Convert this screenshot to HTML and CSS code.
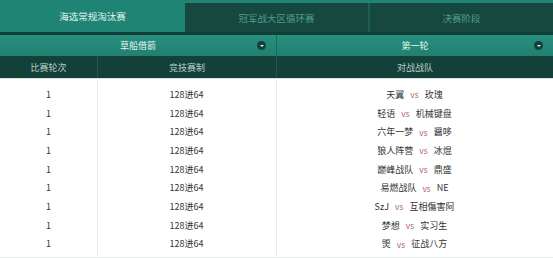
FILE: index.html
```html
<!DOCTYPE html>
<html lang="zh-CN">
<head>
    <meta charset="UTF-8">
    <meta name="viewport" content="width=device-width, initial-scale=1.0">
    <title>赛程</title>
    <link rel="stylesheet" href="styles.css">
</head>
<body>

    <div class="tabs">
        <div class="tab active">海选常规淘汰赛</div>
        <div class="tab">冠军战大区循环赛</div>
        <div class="tab last">决赛阶段</div>
    </div>

    <div class="filters">
        <div class="select first">
            <span>草船借箭</span>
            <i class="arrow"></i>
        </div>
        <div class="select">
            <span>第一轮</span>
            <i class="arrow"></i>
        </div>
    </div>

    <div class="row head">
        <div class="cell">比赛轮次</div>
        <div class="cell">竞技赛制</div>
        <div class="cell">对战战队</div>
    </div>

    <div class="list">
        <div class="row"><div class="cell">1</div><div class="cell">128进64</div><div class="cell">天翼<em>vs</em>玫瑰</div></div>
        <div class="row"><div class="cell">1</div><div class="cell">128进64</div><div class="cell">轻语<em>vs</em>机械键盘</div></div>
        <div class="row"><div class="cell">1</div><div class="cell">128进64</div><div class="cell">六年一梦<em>vs</em>醤哆</div></div>
        <div class="row"><div class="cell">1</div><div class="cell">128进64</div><div class="cell">狼人阵营<em>vs</em>冰焜</div></div>
        <div class="row"><div class="cell">1</div><div class="cell">128进64</div><div class="cell">巅峰战队<em>vs</em>鼎盛</div></div>
        <div class="row"><div class="cell">1</div><div class="cell">128进64</div><div class="cell">易燃战队<em>vs</em>NE</div></div>
        <div class="row"><div class="cell">1</div><div class="cell">128进64</div><div class="cell">SzJ<em>vs</em>互相傷害阿</div></div>
        <div class="row"><div class="cell">1</div><div class="cell">128进64</div><div class="cell">梦想<em>vs</em>实习生</div></div>
        <div class="row"><div class="cell">1</div><div class="cell">128进64</div><div class="cell">煚<em>vs</em>征战八方</div></div>
    </div>

</body>
</html>
```

FILE: styles.css
```css
body {
    margin: 0;
    width: 553px;
    font-family: "Noto Sans CJK SC", "Noto Sans", sans-serif;
    font-size: 9px;
    background: #fff;
}
.tabs {
    display: flex;
    height: 32px;
    background: #1f8474;
    border-bottom: 3px solid #123d35;
}
.tab {
    flex: 1;
    margin-top: 3px;
    background: #17483f;
    color: #4c9d8d;
    font-size: 9.5px;
    display: flex;
    align-items: center;
    justify-content: center;
    border-right: 2px solid #1f5e53;
}
.tab.last {
    border-right: none;
}
.tab.active {
    flex: 0 0 185px;
    margin-top: 0;
    background: #1f8474;
    color: #e3f1ee;
    border-right: none;
}
.filters {
    display: flex;
    height: 21px;
}
.select {
    flex: 1;
    position: relative;
    display: flex;
    align-items: center;
    justify-content: center;
    background: linear-gradient(#26907f, #217f70);
    color: #eaf5f2;
}
.select.first {
    flex: 0 0 276px;
    border-right: 1px solid #1a6b5e;
}
.arrow {
    position: absolute;
    right: 10px;
    top: 6px;
    width: 9px;
    height: 9px;
    border-radius: 50%;
    background: #163f37;
}
.arrow::after {
    content: "";
    position: absolute;
    left: 2.5px;
    top: 3.5px;
    border-left: 2px solid transparent;
    border-right: 2px solid transparent;
    border-top: 2px solid #dfeeea;
}
.row {
    display: grid;
    grid-template-columns: 97px 179px 1fr;
    height: 18.7px;
}
.cell {
    display: flex;
    align-items: center;
    justify-content: center;
    color: #333;
    border-left: 1px solid #e6eceb;
}
.cell:first-child {
    border-left: none;
}
.row.head {
    height: 22px;
    background: #134139;
    border-bottom: 1px solid #dde5e3;
}
.row.head .cell {
    color: #b8cfc9;
    border-left-color: #1b5a4f;
}
.list {
    padding: 6px 0 4px;
    border-bottom: 1px solid #e6eceb;
    background: linear-gradient(90deg, transparent 97px, #e6eceb 97px, #e6eceb 98px, transparent 98px, transparent 276px, #e6eceb 276px, #e6eceb 277px, transparent 277px);
}
.list .cell {
    border-left: none;
}
em {
    font-style: normal;
    color: #b15a70;
    margin: 0 6px;
    font-size: 8.5px;
}
```
